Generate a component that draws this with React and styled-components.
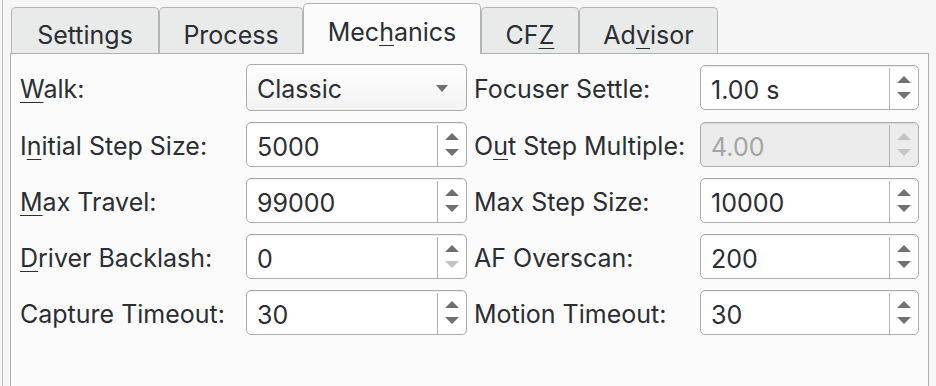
import React from "react";
import styled, { createGlobalStyle } from "styled-components";

const Global = createGlobalStyle`
  html, body {
    margin: 0;
    padding: 0;
    background: #f6f6f6;
    font-family: Inter, "Noto Sans", "Liberation Sans", sans-serif;
    color: #2b2e33;
  }
`;

const tabs = [
  { label: "Settings", width: 148 },
  { label: "Process", width: 144 },
  { label: "Mechanics", key: "h", width: 178, active: true },
  { label: "CFZ", key: "Z", width: 98 },
  { label: "Advisor", key: "v", width: 139 },
];

const rows = [
  {
    left: { label: "Walk:", key: "W", combo: "Classic" },
    right: { label: "Focuser Settle:", value: "1.00 s" },
  },
  {
    left: { label: "Initial Step Size:", key: "n", value: "5000" },
    right: { label: "Out Step Multiple:", key: "u", value: "4.00", disabled: true },
  },
  {
    left: { label: "Max Travel:", key: "M", value: "99000" },
    right: { label: "Max Step Size:", value: "10000" },
  },
  {
    left: { label: "Driver Backlash:", key: "D", value: "0", atMin: true },
    right: { label: "AF Overscan:", value: "200" },
  },
  {
    left: { label: "Capture Timeout:", value: "30" },
    right: { label: "Motion Timeout:", value: "30" },
  },
];

// underline the mnemonic letter, like a Qt buddy label
function Mnemonic({ text, mark }) {
  if (!mark) return text;
  const i = text.indexOf(mark);
  if (i < 0) return text;
  return (
    <>
      {text.slice(0, i)}
      <U>{text[i]}</U>
      {text.slice(i + 1)}
    </>
  );
}

function Arrow({ up, dim }) {
  return (
    <svg width="14" height="7" viewBox="0 0 14 7">
      <path
        d={up ? "M0 7 L7 0 L14 7 Z" : "M0 0 L14 0 L7 7 Z"}
        fill={dim ? "#c4c4c4" : "#707070"}
      />
    </svg>
  );
}

function SpinBox({ value, disabled, atMin }) {
  return (
    <Spin $disabled={disabled}>
      <SpinText $disabled={disabled}>{value}</SpinText>
      <SpinButtons>
        <Arrow up dim={disabled} />
        <Arrow dim={disabled || atMin} />
      </SpinButtons>
    </Spin>
  );
}

function Field({ item }) {
  return (
    <>
      <Label>
        <Mnemonic text={item.label} mark={item.key} />
      </Label>
      {item.combo ? (
        <Combo>
          <span>{item.combo}</span>
          <svg width="12" height="7" viewBox="0 0 12 7">
            <path d="M0 0 L12 0 L6 7 Z" fill="#707070" />
          </svg>
        </Combo>
      ) : (
        <SpinBox {...item} />
      )}
    </>
  );
}

export default function App() {
  return (
    <>
      <Global />
      <Page>
        <Frame>
          <TabWidget>
            <TabBar>
              {tabs.map((t) => (
                <Tab key={t.label} $active={t.active} $w={t.width}>
                  <Mnemonic text={t.label} mark={t.key} />
                </Tab>
              ))}
            </TabBar>
            <Pane>
              <Form>
                {rows.map((r, i) => (
                  <React.Fragment key={i}>
                    <Field item={r.left} />
                    <Field item={r.right} />
                  </React.Fragment>
                ))}
              </Form>
            </Pane>
          </TabWidget>
        </Frame>
      </Page>
    </>
  );
}

const Page = styled.div`
  height: 386px;
  padding-left: 2px;
  overflow: hidden;
`;

const Frame = styled.div`
  height: 100%;
  border-left: 1px solid #bdbdbd;
  padding-left: 7px;
`;

const TabWidget = styled.div`
  width: 919px;
  display: flex;
  flex-direction: column;
  height: 100%;
`;

const TabBar = styled.div`
  display: flex;
  align-items: flex-end;
  height: 53px;
  padding-left: 1px;
`;

const Tab = styled.div`
  box-sizing: border-box;
  width: ${(p) => p.$w}px;
  height: ${(p) => (p.$active ? "51px" : "46px")};
  margin-bottom: ${(p) => (p.$active ? "-1px" : "0")};
  padding-top: ${(p) => (p.$active ? "14px" : "13px")};
  text-align: center;
  white-space: nowrap;
  border: 1px solid #b5b5b5;
  border-bottom: none;
  border-radius: 5px 5px 0 0;
  background: ${(p) => (p.$active ? "#fbfbfb" : "#e9eaea")};
  font-size: 25px;
  line-height: 28px;
  position: relative;
  z-index: ${(p) => (p.$active ? 1 : 0)};
`;

const Pane = styled.div`
  flex: 1;
  border: 1px solid #b0b0b0;
  border-bottom: none;
  background: #fbfbfb;
`;

const Form = styled.div`
  display: grid;
  grid-template-columns: 219px 221px 219px 219px;
  grid-template-rows: 47px repeat(4, 45px);
  column-gap: 7px;
  row-gap: 11px;
  align-items: center;
  padding: 10px 0 0 9px;
`;

const Label = styled.div`
  font-size: 25px;
  line-height: 28px;
  padding-top: 2px;
  white-space: nowrap;
`;

const U = styled.span`
  text-decoration: underline;
  text-decoration-thickness: 1px;
  text-underline-offset: 4px;
`;

const Combo = styled.div`
  box-sizing: border-box;
  height: 47px;
  border: 1px solid #ababab;
  border-radius: 5px;
  background: linear-gradient(#fefefe, #f3f3f3);
  display: flex;
  align-items: center;
  justify-content: space-between;
  padding: 2px 18px 0 10px;
  font-size: 25px;
`;

const Spin = styled.div`
  box-sizing: border-box;
  height: 45px;
  border: 1px solid #ababab;
  border-radius: 5px;
  background: ${(p) => (p.$disabled ? "#ececec" : "#ffffff")};
  box-shadow: inset 0 2px 1px -1px rgba(0, 0, 0, 0.08);
  display: flex;
  align-items: stretch;
`;

const SpinText = styled.div`
  flex: 1;
  display: flex;
  align-items: center;
  padding: 2px 0 0 10px;
  font-size: 25px;
  color: ${(p) => (p.$disabled ? "#a4a4a4" : "inherit")};
  border-right: 1px solid #b3b3b3;
  margin: 2px 0 0 0;
`;

const SpinButtons = styled.div`
  width: 28px;
  display: flex;
  flex-direction: column;
  align-items: center;
  justify-content: center;
  gap: 9px;
`;
